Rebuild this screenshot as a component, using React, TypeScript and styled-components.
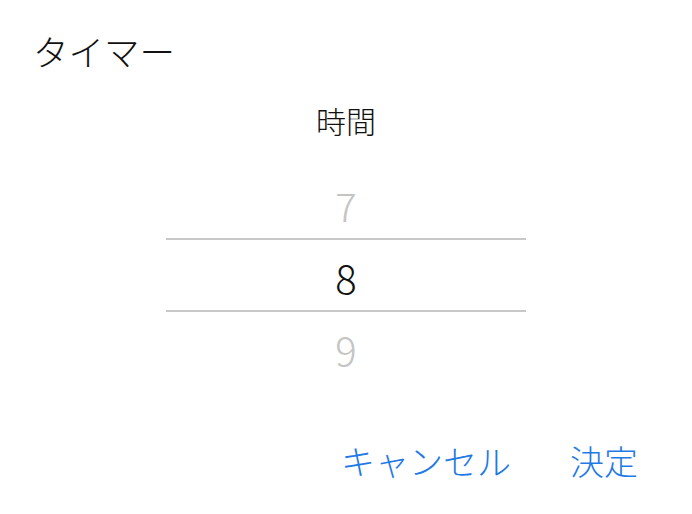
import React from "react";
import styled, { createGlobalStyle } from "styled-components";

const GlobalStyle = createGlobalStyle`
  html, body {
    margin: 0;
    padding: 0;
    background: #ffffff;
  }
  body {
    font-family: "Noto Sans CJK JP", "Noto Sans", sans-serif;
    font-weight: 300;
    color: #111111;
  }
`;

const Dialog = styled.div`
  width: 692px;
  height: 514px;
  display: flex;
  flex-direction: column;
  box-sizing: border-box;
  padding: 33px 0 0 0;
`;

const Title = styled.h1`
  margin: 0 0 0 33px;
  font-size: 35.5px;
  line-height: 35px;
  font-weight: 300;
  color: #111111;
`;

const ColumnLabel = styled.div`
  margin-top: 37px;
  text-align: center;
  font-size: 30px;
  line-height: 30px;
  color: #111111;
`;

const Picker = styled.div`
  width: 360px;
  margin: 33px auto 0;
  display: flex;
  flex-direction: column;
`;

const Row = styled.div<{ $selected?: boolean }>`
  height: 70px;
  box-sizing: border-box;
  padding-top: 4px;
  display: flex;
  align-items: center;
  justify-content: center;
  font-size: 40px;
  line-height: 40px;
  font-weight: 300;
  color: ${(p) => (p.$selected ? "#111111" : "#c4c4c4")};
`;

const Divider = styled.div`
  height: 2px;
  background: #c8c8c8;
`;

const Actions = styled.div`
  margin-top: auto;
  margin-bottom: 36px;
  display: flex;
  justify-content: flex-end;
  gap: 59px;
  padding-right: 54px;
`;

const ActionButton = styled.button`
  border: none;
  background: none;
  padding: 0;
  font-family: inherit;
  font-weight: 300;
  font-size: 34px;
  line-height: 34px;
  color: #1f7ae6;
  cursor: pointer;
`;

export default function App() {
  return (
    <>
      <GlobalStyle />
      <Dialog>
        <Title>タイマー</Title>
        <ColumnLabel>時間</ColumnLabel>
        <Picker>
          <Row>7</Row>
          <Divider />
          <Row $selected>8</Row>
          <Divider />
          <Row>9</Row>
        </Picker>
        <Actions>
          <ActionButton>キャンセル</ActionButton>
          <ActionButton>決定</ActionButton>
        </Actions>
      </Dialog>
    </>
  );
}
